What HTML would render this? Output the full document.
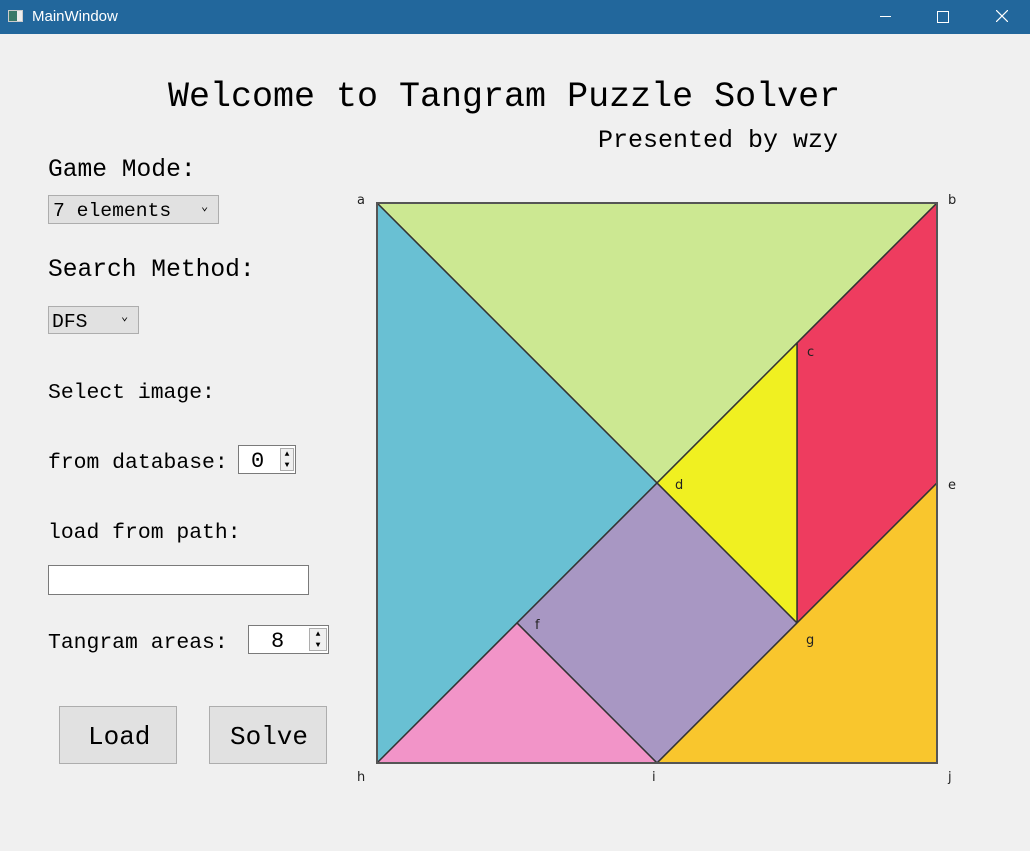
<!DOCTYPE html>
<html><head><style>
body{margin:0;width:1030px;height:851px;background:#f0f0f0;overflow:hidden;position:relative;font-family:"Liberation Mono",monospace;color:#000}
.t{position:absolute;white-space:pre}
.tb{position:absolute;left:0;top:0;width:1030px;height:34px;background:#22679c;color:#fff;font-family:"Liberation Sans",sans-serif;font-size:15px}
.box{position:absolute;border:1px solid #adadad;background:#e1e1e1;box-sizing:border-box}
.wbox{position:absolute;border:1px solid #7a7a7a;background:#fff;box-sizing:border-box}
.lab{position:absolute;font-family:"DejaVu Sans","Liberation Sans",sans-serif;font-size:13px;color:#222}
</style></head><body>
<div class="tb">
<div style="position:absolute;left:8px;top:10px;width:15px;height:12px;background:#eee;border:1px solid #ccc;box-sizing:border-box"><div style="width:8px;height:10px;background:#3a7a6a"></div></div>
<div class="t" style="left:32px;top:8px">MainWindow</div>
<div style="position:absolute;left:880px;top:16px;width:11px;height:1px;background:#fff"></div>
<div style="position:absolute;left:937px;top:11px;width:10px;height:10px;border:1px solid #fff"></div>
<svg style="position:absolute;left:996px;top:10px" width="12" height="12"><path d="M0 0L12 12M12 0L0 12" stroke="#fff" stroke-width="1.2"/></svg>
</div>
<div class="t" style="left:168px;top:77px;font-size:35px">Welcome to Tangram Puzzle Solver</div>
<div class="t" style="left:598px;top:126px;font-size:25px">Presented by wzy</div>
<div class="t" style="left:48px;top:157px;font-size:24.6px">Game Mode:</div>
<div class="box" style="left:48px;top:195px;width:171px;height:29px"></div>
<div class="t" style="left:53px;top:200px;font-size:19.7px">7 elements</div>
<div class="t" style="left:201px;top:199px;font-size:12px">&#8964;</div>
<div class="t" style="left:48px;top:257px;font-size:24.6px">Search Method:</div>
<div class="box" style="left:48px;top:306px;width:91px;height:28px"></div>
<div class="t" style="left:52px;top:311px;font-size:19.7px">DFS</div>
<div class="t" style="left:121px;top:309px;font-size:12px">&#8964;</div>
<div class="t" style="left:48px;top:381px;font-size:21.4px">Select image:</div>
<div class="t" style="left:48px;top:451px;font-size:21.4px">from database:</div>
<div class="wbox" style="left:238px;top:445px;width:58px;height:29px"></div>
<div class="t" style="left:251px;top:449px;font-size:22px">0</div>
<div class="box" style="left:280px;top:448px;width:14px;height:23px;background:#f0f0f0;font-size:8px;line-height:11px;text-align:center">&#9650;<br>&#9660;</div>
<div class="t" style="left:48px;top:521px;font-size:21.4px">load from path:</div>
<div class="wbox" style="left:48px;top:565px;width:261px;height:30px"></div>
<div class="t" style="left:48px;top:631px;font-size:21.4px">Tangram areas:</div>
<div class="wbox" style="left:248px;top:625px;width:81px;height:29px"></div>
<div class="t" style="left:271px;top:629px;font-size:22px">8</div>
<div class="box" style="left:309px;top:628px;width:18px;height:23px;background:#f0f0f0;font-size:8px;line-height:11px;text-align:center">&#9650;<br>&#9660;</div>
<div class="box" style="left:59px;top:706px;width:118px;height:58px"></div>
<div class="t" style="left:88px;top:722px;font-size:26px">Load</div>
<div class="box" style="left:209px;top:706px;width:118px;height:58px"></div>
<div class="t" style="left:230px;top:722px;font-size:26px">Solve</div>
<svg style="position:absolute;left:0;top:0" width="1030" height="851">
<g stroke="#333" stroke-width="1.5" stroke-linejoin="round">
<polygon points="377,203 937,203 657,483" fill="#cce892"/>
<polygon points="377,203 657,483 377,763" fill="#69c0d3"/>
<polygon points="937,203 937,483 797,623 797,343" fill="#ee3c5f"/>
<polygon points="797,343 657,483 797,623" fill="#f0f021"/>
<polygon points="657,483 797,623 657,763 517,623" fill="#a897c3"/>
<polygon points="517,623 657,763 377,763" fill="#f294c8"/>
<polygon points="797,623 937,483 937,763 657,763" fill="#f9c62d"/>
</g>
<rect x="377" y="203" width="560" height="560" fill="none" stroke="#555" stroke-width="2"/>
</svg>
<div class="lab" style="left:357px;top:193px">a</div>
<div class="lab" style="left:948px;top:193px">b</div>
<div class="lab" style="left:807px;top:345px">c</div>
<div class="lab" style="left:675px;top:478px">d</div>
<div class="lab" style="left:948px;top:478px">e</div>
<div class="lab" style="left:535px;top:618px">f</div>
<div class="lab" style="left:806px;top:633px">g</div>
<div class="lab" style="left:357px;top:770px">h</div>
<div class="lab" style="left:652px;top:770px">i</div>
<div class="lab" style="left:948px;top:770px">j</div>
</body></html>
